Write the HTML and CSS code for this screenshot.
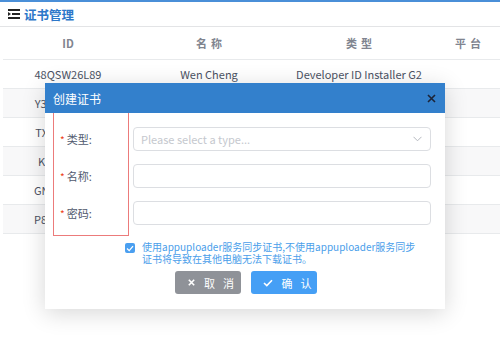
FILE: index.html
```html
<!DOCTYPE html>
<html lang="zh-CN">
<head>
    <meta charset="UTF-8">
    <title>证书管理</title>
    <link rel="stylesheet" href="styles.css">
</head>
<body>
    <div class="topbar">
        <svg class="menu-icon" width="12" height="10" viewBox="0 0 12 10">
            <rect x="0" y="0" width="12" height="2" fill="#222"/>
            <rect x="4" y="4" width="8" height="2" fill="#222"/>
            <path d="M0 3 L3 5 L0 7 Z" fill="#222"/>
            <rect x="0" y="8" width="12" height="2" fill="#222"/>
        </svg>
        <span class="title">证书管理</span>
    </div>

    <table class="cert-table">
        <thead>
            <tr>
                <th class="col-id">ID</th>
                <th class="col-name spaced">名称</th>
                <th class="col-type spaced">类型</th>
                <th class="col-platform spaced">平台</th>
            </tr>
        </thead>
        <tbody>
            <tr><td>48QSW26L89</td><td>Wen Cheng</td><td>Developer ID Installer G2</td><td></td></tr>
            <tr><td>Y3QSW26L89</td><td>Wen Cheng</td><td>Developer ID Application</td><td></td></tr>
            <tr><td>TX8SW26L89</td><td>Wen Cheng</td><td>iOS Distribution</td><td></td></tr>
            <tr><td>K7JBL3V2M</td><td>Wen Cheng</td><td>iOS Development</td><td></td></tr>
            <tr><td>GN5SW26L89</td><td>Wen Cheng</td><td>Apple Distribution</td><td></td></tr>
            <tr><td>P8QSW26L89</td><td>Wen Cheng</td><td>Apple Development</td><td></td></tr>
        </tbody>
    </table>

    <div class="modal">
        <div class="modal-header">
            <span>创建证书</span>
            <svg class="close" width="9" height="9" viewBox="0 0 9 9"><path d="M1 1 L8 8 M8 1 L1 8" stroke="#1c2438" stroke-width="1.6"/></svg>
        </div>
        <div class="modal-body">
            <div class="form">
                <div class="labels">
                    <div class="label"><i>*</i>类型:</div>
                    <div class="label"><i>*</i>名称:</div>
                    <div class="label"><i>*</i>密码:</div>
                </div>
                <div class="fields">
                    <div class="select">
                        <span>Please select a type...</span>
                        <svg width="9" height="6" viewBox="0 0 9 6"><path d="M0.5 0.8 L4.5 4.8 L8.5 0.8" fill="none" stroke="#b5b8bf" stroke-width="1"/></svg>
                    </div>
                    <div class="input"></div>
                    <div class="input"></div>
                </div>
            </div>
            <div class="sync">
                <span class="checkbox">
                    <svg width="8" height="7" viewBox="0 0 8 7"><path d="M1 3.5 L3.2 5.6 L7 1.2" fill="none" stroke="#fff" stroke-width="1.3"/></svg>
                </span>
                <span class="sync-text">使用appuploader服务同步证书,不使用appuploader服务同步<br>证书将导致在其他电脑无法下载证书。</span>
            </div>
            <div class="buttons">
                <button class="btn btn-cancel">
                    <svg class="btn-icon" width="7" height="7" viewBox="0 0 7 7"><path d="M0.8 0.8 L6.2 6.2 M6.2 0.8 L0.8 6.2" stroke="#fff" stroke-width="1.6"/></svg>
                    <span class="btn-text">取消</span>
                </button>
                <button class="btn btn-ok">
                    <svg class="btn-icon" width="10" height="8" viewBox="0 0 10 8"><path d="M1 4 L3.8 6.6 L9 1.2" fill="none" stroke="#fff" stroke-width="1.6"/></svg>
                    <span class="btn-text">确认</span>
                </button>
            </div>
        </div>
    </div>
</body>
</html>
```

FILE: styles.css
```css
body {
    margin: 0;
    font-family: "Noto Sans CJK SC", sans-serif;
    font-size: 12px;
    color: #4b5263;
    background-color: #fff;
    overflow: hidden;
}

.topbar {
    height: 24px;
    border-top: 2px solid #4a8fd8;
    border-bottom: 1px solid #e3e4e6;
    display: flex;
    align-items: center;
    padding-left: 8px;
}

.menu-icon {
    margin-right: 4px;
}

.title {
    color: #2d77c9;
    font-weight: bold;
    font-size: 12.5px;
}

.cert-table {
    margin-left: 3px;
    border-collapse: collapse;
    table-layout: fixed;
    width: 530px;
}

.col-id { width: 130px; }
.col-name { width: 152px; }
.col-type { width: 148px; }
.col-platform { width: 100px; }

th {
    height: 32px;
    padding: 0;
    font-size: 11px;
    font-weight: bold;
    color: #80848f;
    border-bottom: 1px solid #e8eaec;
    text-align: center;
}

th.spaced {
    letter-spacing: 4px;
    text-indent: 4px;
}

th.col-platform {
    text-align: left;
    padding-left: 18px;
}

td {
    height: 28px;
    padding: 0;
    font-size: 11px;
    text-align: center;
    border-bottom: 1px solid #e8eaec;
    white-space: nowrap;
}

tbody tr:nth-child(even) td {
    background-color: #f8f8f9;
}

/* dialog laid over the table */
.modal {
    position: absolute;
    left: 45px;
    top: 83px;
    width: 400px;
    background-color: #fff;
    box-shadow: 0 4px 22px rgba(0, 0, 0, 0.16);
}

.modal-header {
    height: 30px;
    background-color: #3380cc;
    color: #fff;
    display: flex;
    align-items: center;
    justify-content: space-between;
    padding: 0 9px 0 8px;
    font-size: 12px;
}

.modal-body {
    padding: 0 14px 15px 8px;
}

.form {
    display: flex;
}

.labels {
    width: 68px;
    border: 1px solid #ec7b7b;
    border-top: none;
    padding: 14px 0 10px 6px;
    display: flex;
    flex-direction: column;
    gap: 13px;
}

.label {
    height: 24px;
    line-height: 24px;
    font-size: 11px;
    color: #515a6e;
}

.label i {
    font-style: normal;
    color: #ed4014;
    margin-right: 2px;
    font-size: 10px;
}

.fields {
    flex: 1;
    margin-left: 4px;
    padding-top: 14px;
    display: flex;
    flex-direction: column;
    gap: 13px;
}

.select, .input {
    height: 22px;
    border: 1px solid #dcdee2;
    border-radius: 4px;
}

.select {
    display: flex;
    align-items: center;
    justify-content: space-between;
    padding: 0 8px 0 7px;
    color: #c5c8ce;
    font-size: 11px;
}

.sync {
    display: flex;
    align-items: flex-start;
    margin: 5px 0 0 72px;
}

.checkbox {
    width: 10px;
    height: 10px;
    margin-top: 2px;
    border-radius: 2px;
    background-color: #4a9ff0;
    display: flex;
    align-items: center;
    justify-content: center;
    flex-shrink: 0;
}

.sync-text {
    margin-left: 7px;
    font-size: 10px;
    line-height: 12px;
    color: #4a9eea;
}

.buttons {
    display: flex;
    justify-content: center;
    gap: 10px;
    margin-top: 6px;
    padding-left: 8px;
}

.btn {
    width: 66px;
    height: 23px;
    border: none;
    border-radius: 3px;
    color: #fff;
    font-family: inherit;
    font-size: 11px;
    padding: 0 0 0 6px;
    display: flex;
    align-items: center;
    justify-content: center;
    white-space: nowrap;
}

.btn-icon {
    margin-right: 9px;
}

.btn-text {
    letter-spacing: 8px;
    margin-right: -8px;
}

.btn-cancel {
    background-color: #8f9298;
}

.btn-ok {
    background-color: #459ff5;
}
```
